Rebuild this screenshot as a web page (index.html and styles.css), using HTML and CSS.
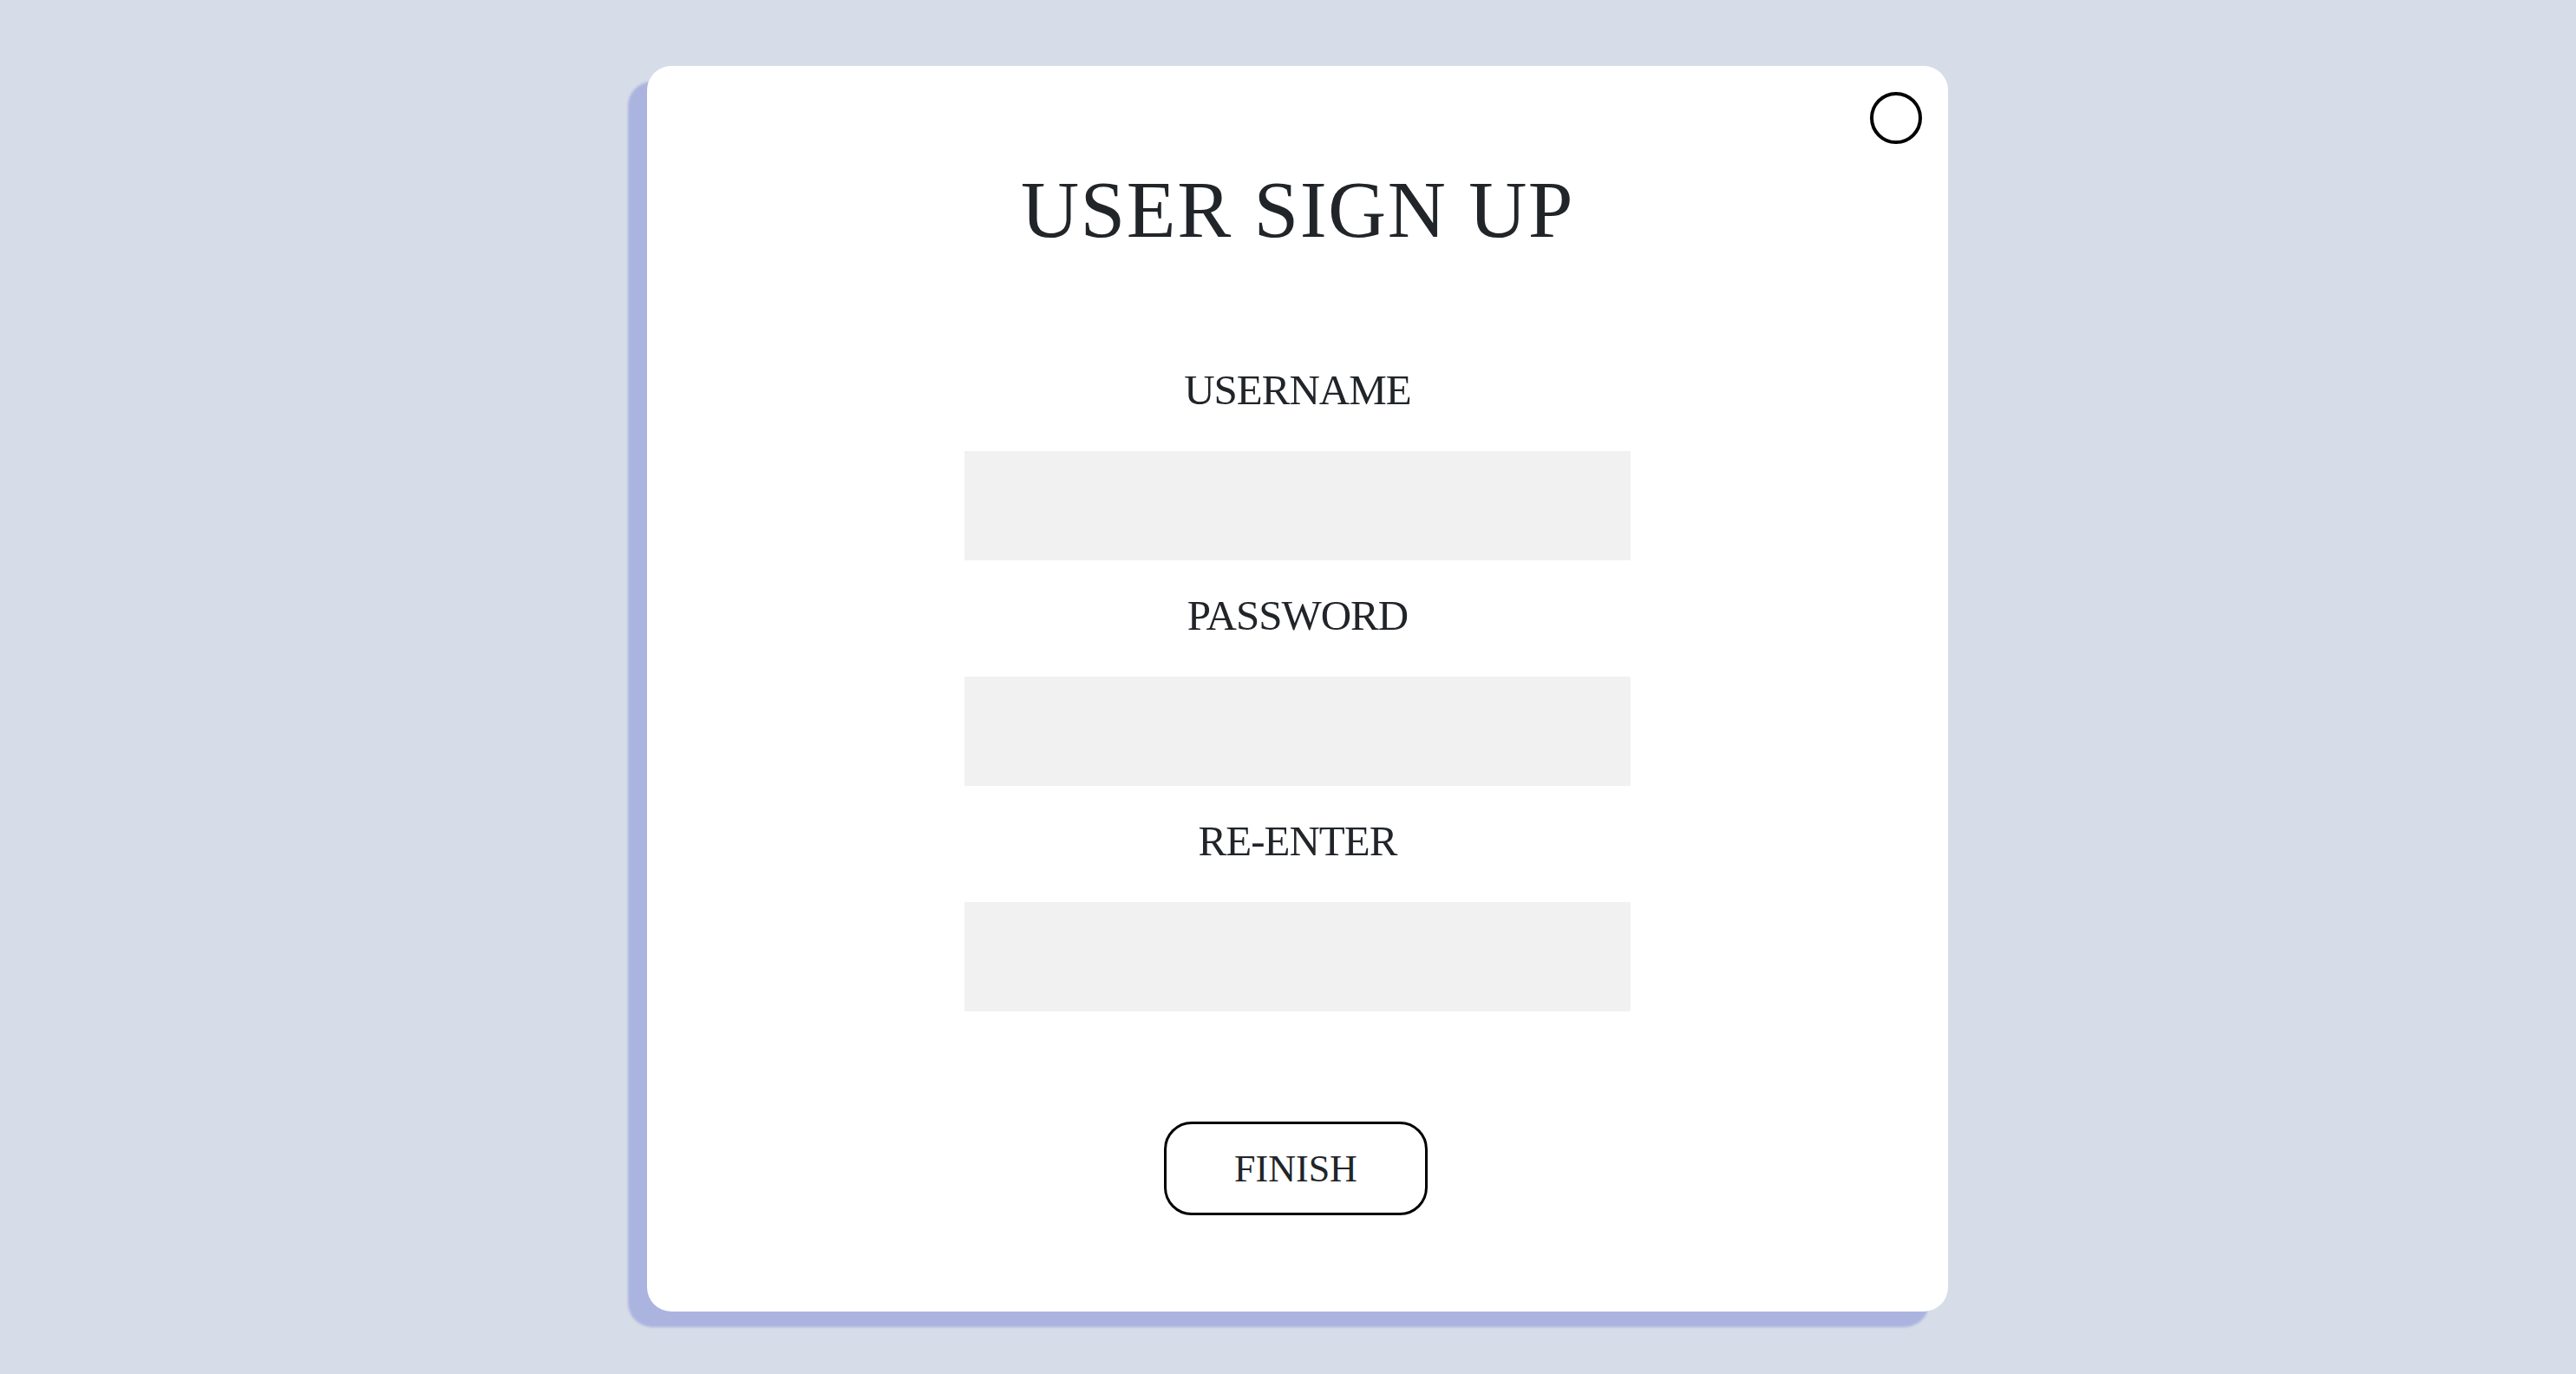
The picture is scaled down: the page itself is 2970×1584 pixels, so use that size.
FILE: index.html
```html
<!DOCTYPE html>
<html lang="en">
<head>
<meta charset="utf-8">
<title>User Sign Up</title>
<link rel="stylesheet" href="styles.css">
</head>
<body>
<div class="stage">
  <div class="card">
    <button class="close" aria-label="Close"></button>
    <h1 class="title">USER SIGN UP</h1>
    <form class="form">
      <div class="field">
        <label class="label" for="username">USERNAME</label>
        <input class="input" id="username" type="text">
      </div>
      <div class="field">
        <label class="label" for="password">PASSWORD</label>
        <input class="input" id="password" type="password">
      </div>
      <div class="field">
        <label class="label" for="reenter">RE-ENTER</label>
        <input class="input" id="reenter" type="password">
      </div>
      <button class="finish" type="button">FINISH</button>
    </form>
  </div>
</div>
</body>
</html>
```
FILE: styles.css
```css
html, body {
  margin: 0;
  padding: 0;
}
body {
  background: #d6dde8;
  font-family: "Liberation Serif", "Times New Roman", serif;
  color: #212529;
  min-height: 1584px;
}
.stage {
  display: flex;
  justify-content: center;
  padding-top: 76px;
}
.card {
  position: relative;
  box-sizing: border-box;
  width: 1500px;
  height: 1436px;
  margin-left: 22px;
  padding-top: 119px;
  background: #ffffff;
  border-radius: 28px;
  box-shadow: -22px 18px 3px #abb4df;
  display: flex;
  flex-direction: column;
  align-items: center;
}
.close {
  position: absolute;
  top: 30px;
  right: 30px;
  width: 60px;
  height: 60px;
  box-sizing: border-box;
  border: 4px solid #000;
  border-radius: 50%;
  background: #fff;
  padding: 0;
}
.title {
  margin: 0;
  font-size: 93px;
  line-height: 93px;
  font-weight: 400;
  letter-spacing: 1.5px;
  text-align: center;
}
.form {
  margin-top: 137px;
  display: flex;
  flex-direction: column;
  align-items: center;
  gap: 39px;
}
.field {
  display: flex;
  flex-direction: column;
  align-items: center;
  gap: 46px;
}
.label {
  font-size: 49px;
  line-height: 49px;
  letter-spacing: -1px;
  text-align: center;
}
.input {
  box-sizing: border-box;
  width: 768px;
  height: 126px;
  border: none;
  background: #f1f1f1;
  outline: none;
  font-size: 40px;
  padding: 0 20px;
}
.finish {
  margin-top: 88px;
  margin-right: 4px;
  box-sizing: border-box;
  width: 304px;
  height: 108px;
  border: 3.5px solid #000;
  border-radius: 32px;
  background: #fff;
  font-family: "Liberation Serif", "Times New Roman", serif;
  font-size: 44px;
  color: #212529;
  display: flex;
  align-items: center;
  justify-content: center;
  padding: 0;
}
```
